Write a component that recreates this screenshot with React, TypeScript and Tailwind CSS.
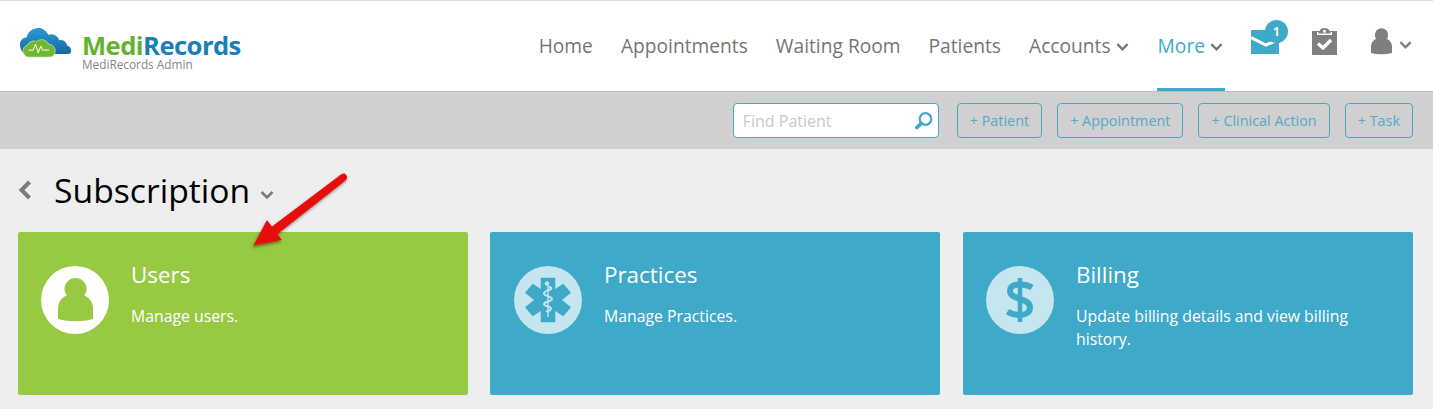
import React from "react";

const Chevron = ({ className = "" }: { className?: string }) => (
  <svg viewBox="0 0 14 10" className={className} fill="none" stroke="currentColor" strokeWidth="2.6">
    <path d="M1.5 2 L7 7.5 L12.5 2" />
  </svg>
);

const UserShape = ({ className = "" }: { className?: string }) => (
  <svg viewBox="0 0 35 44" className={className}>
    <circle cx="17.5" cy="11" r="11" fill="currentColor" />
    <path
      fill="currentColor"
      d="M0 41V31C0 24 3.500 19.500 9 17.500h17C31.500 19.500 35 24 35 31v10C24 44 11 44 0 41z"
    />
  </svg>
);

const Logo = () => (
  <div className="relative h-full w-[240px]">
    <svg viewBox="15 15 160 92" className="absolute left-[19px] top-[26px] h-[31px] w-[53px]">
      <defs>
        <linearGradient id="cl" x1="0" x2="0" y1="0" y2="1">
          <stop offset="0" stopColor="#2a9bd6" />
          <stop offset="1" stopColor="#14689f" />
        </linearGradient>
      </defs>
      <g fill="url(#cl)">
        <path d="M18 70C16 55 28 46 38 46 42 26 62 14 82 18 92 22 100 30 104 38 120 32 134 44 136 54 150 50 160 62 160 70 170 72 174 82 172 88 172 94 168 96 160 96H34C24 92 19 82 18 70z" />
      </g>
      <path
        fill="#6fb82f"
        stroke="#d7ecc4"
        strokeWidth="2"
        d="M30 96C24 86 28 72 40 70 44 58 58 54 68 58 78 48 100 52 104 66 116 66 126 76 124 90 122 100 116 105 108 105H44C38 105 32 102 30 96z"
      />
      <path d="M44 84H58L65 66 73 92 81 72 86 84H106" fill="none" stroke="#fff" strokeWidth="3" />
    </svg>
    <div className="absolute left-[82px] top-[33px] flex text-[25.600px] leading-[24px] font-bold tracking-[-0.55px]">
      <span className="text-[#62b22f]">Medi</span>
      <span className="text-[#1a7fb8]">Records</span>
    </div>
    <div className="absolute left-[82px] top-[57px] text-[11.800px] leading-[12px] text-[#85858a]">
      MediRecords Admin
    </div>
  </div>
);

const NavItem = ({ label, chevron, active }: { label: string; chevron?: boolean; active?: boolean }) => (
  <div
    className={`flex h-full items-center gap-[5px] border-b-[3px] pl-[1px] pt-[3px] ${chevron ? "pr-[2px]" : "pr-[1px]"} ${
      active ? "border-[#3fa9c9] text-[#3fa9c9]" : "border-transparent text-[#777572]"
    }`}
  >
    <span>{label}</span>
    {chevron && <Chevron className="mt-[2px] h-[10px] w-[13px] text-[#777]" />}
  </div>
);

const ActionButton = ({ label }: { label: string }) => (
  <div className="flex h-[35px] items-center rounded-[4px] border border-[#4aa6c6] px-[12px] text-[14.400px] text-[#52a9c9]">
    {label}
  </div>
);

const Card = ({
  title,
  text,
  color,
  icon,
  className = "pl-[23px]",
}: {
  title: string;
  text: string;
  color: string;
  icon: React.ReactNode;
  className?: string;
}) => (
  <div className={`flex h-[163px] w-[450px] gap-[22px] rounded-[2px] pr-[23px] pt-[34px] text-white ${color} ${className}`}>
    <div className="shrink-0">{icon}</div>
    <div className="min-w-0 flex-1 pr-[30px]">
      <div className="text-[22.400px] leading-[18px]">{title}</div>
      <div className="mt-[21px] text-[15.800px] leading-[23px]">{text}</div>
    </div>
  </div>
);

export default function App() {
  return (
    <div className="relative h-[409px] w-[1433px] overflow-hidden bg-[#eeeeee] font-['Open_Sans',sans-serif]">
      <header className="flex h-[92px] items-stretch justify-between border-t border-b border-t-[#dddddd] border-b-[#bbbbbb] bg-white">
        <Logo />
        <div className="flex items-stretch pr-[21px]">
          <nav className="flex items-stretch gap-[26px] text-[19.200px]">
            <NavItem label="Home" />
            <NavItem label="Appointments" />
            <NavItem label="Waiting Room" />
            <NavItem label="Patients" />
            <NavItem label="Accounts" chevron />
            <NavItem label="More" chevron active />
          </nav>
          <div className="relative ml-[26px] flex w-[37px] items-start pt-[29px]">
            <svg viewBox="0 0 28 24" className="h-[24px] w-[28px]">
              <path fill="#3fa9c9" d="M0 0h28v24H0z" />
              <path d="M0 7.500 15 15 28 9.500" fill="none" stroke="#fff" strokeWidth="3" />
            </svg>
            <div className="absolute left-[14px] top-[19px] flex h-[23px] w-[23px] items-center justify-center rounded-full bg-[#3fa9c9] text-[12px] leading-none font-bold text-white">
              1
            </div>
          </div>
          <div className="ml-[24px] flex items-start pt-[27px]">
            <svg viewBox="0 0 25 27" className="h-[27px] w-[25px]">
              <path
                fill="#7f7f7f"
                fillRule="evenodd"
                d="M0 3h7.500C8 1 10 0 12.500 0S17 1 17.500 3H25v24H0zM12.500 1.800a1.500 1.500 0 1 0 0 3 1.500 1.500 0 0 0 0-3zM5 4v3h15V4h-1.500v1.500h-12V4z"
              />
              <path d="M6 15.500l5 4.500 8-8" fill="none" stroke="#fff" strokeWidth="3.400" />
            </svg>
          </div>
          <div className="ml-[34px] flex items-start gap-[7px] pt-[27px]">
            <UserShape className="h-[27px] w-[21px] text-[#7f7f7f]" />
            <Chevron className="mt-[12px] h-[10px] w-[13px] text-[#7f7f7f]" />
          </div>
        </div>
      </header>

      <div className="flex h-[57px] items-center justify-end gap-[15px] bg-[#d0d0d0] pr-[20px]">
        <div className="mr-[3px] flex h-[35px] w-[206px] items-center justify-between rounded-[4px] border border-[#4aa6c6] bg-white pl-[9px] pr-[4px]">
          <span className="text-[16px] text-[#cbc9c9]">Find Patient</span>
          <svg viewBox="0 0 20 20" className="h-[20px] w-[20px]" fill="none" stroke="#3fa9c9">
            <circle cx="11.500" cy="8" r="5.800" strokeWidth="2.200" />
            <path d="M7 12.500 3 16.500" strokeWidth="3.800" strokeLinecap="round" />
          </svg>
        </div>
        <ActionButton label="+ Patient" />
        <ActionButton label="+ Appointment" />
        <ActionButton label="+ Clinical Action" />
        <ActionButton label="+ Task" />
      </div>

      <div className="flex h-[83px] items-center pl-[18px] pb-[1px]">
        <svg viewBox="0 0 14 20" className="h-[20px] w-[14px] text-[#7a7a7a]" fill="none" stroke="currentColor" strokeWidth="4">
          <path d="M11.500 2 3.500 10l8 8" />
        </svg>
        <h1 className="ml-[22px] text-[33.700px] leading-[42px] font-normal text-[#000]">Subscription</h1>
        <Chevron className="ml-[10px] mt-[10px] h-[10px] w-[14px] text-[#7a7a7a]" />
      </div>

      <div className="grid grid-cols-[repeat(3,450px)] gap-x-[22px] pl-[18px]">
        <Card
          title="Users"
          text="Manage users."
          color="bg-[#98c942]"
          icon={
            <div className="flex h-[68px] w-[68px] items-center justify-center rounded-full bg-white">
              <UserShape className="h-[44px] w-[35px] text-[#98c942]" />
            </div>
          }
        />
        <Card
          title="Practices"
          text="Manage Practices."
          color="bg-[#3fa9c9]"
          className="pl-[24px]"
          icon={
            <div className="flex h-[68px] w-[68px] items-center justify-center rounded-full bg-[#c5e5ef]">
              <svg viewBox="-24 -24 48 48" className="h-[48px] w-[48px]">
                <path
                  fill="#3fa9c9"
                  d="M-7.300-22.300H7.300V-11L15.300-16.300 23-7.300 14 0 23 7.300 15.300 16.300 7.300 11V22.300H-7.300V11L-15.300 16.300-23 7.300-14 0-23-7.300-15.300-16.300-7.300-11z"
                />
                <rect x="-0.700" y="-16" width="1.400" height="33" fill="#c5e5ef" />
                <circle cx="-1" cy="-16.500" r="2.200" fill="#c5e5ef" />
                <path
                  d="M1-13C3-13 4-12 3-11 0-9.500-4-9-4-6.500S4-3.500 4-1-4 1.500-4 4 3 6.500 3 8.500 0 11.500-2 11"
                  fill="none"
                  stroke="#c5e5ef"
                  strokeWidth="2"
                />
              </svg>
            </div>
          }
        />
        <Card
          title="Billing"
          text="Update billing details and view billing history."
          color="bg-[#3fa9c9]"
          className="ml-[1px] pl-[23px]"
          icon={
            <div className="flex h-[68px] w-[68px] items-center justify-center rounded-full bg-[#c5e5ef]">
              <svg viewBox="0 0 30 46" className="h-[46px] w-[30px]" fill="none" stroke="#3fa9c9">
                <path d="M15 1v44" strokeWidth="4.500" />
                <path d="M27 10.500C23 8 19 7.500 15 7.500 9 7.500 5 9.500 5 14s4.500 6 10 8 10 3.500 10 8.500-4.500 7.500-10 7.500c-4.500 0-9-1-12.500-3.500" strokeWidth="6" />
              </svg>
            </div>
          }
        />
      </div>

      <svg viewBox="0 0 1433 409" className="pointer-events-none absolute left-0 top-0 h-[409px] w-[1433px]">
        <defs>
          <filter id="sh" x="-20%" y="-20%" width="140%" height="140%">
            <feDropShadow dx="-1" dy="2" stdDeviation="1.500" floodColor="#000" floodOpacity="0.45" />
          </filter>
        </defs>
        <path
          filter="url(#sh)"
          fill="#e80f0f"
          d="M341 174.500c2-1.500 4.500-1 5.500.8s.6 4-1 5.300L277.500 234 282 240 253.500 245.500 267 220l5 6.500z"
        />
      </svg>
    </div>
  );
}
